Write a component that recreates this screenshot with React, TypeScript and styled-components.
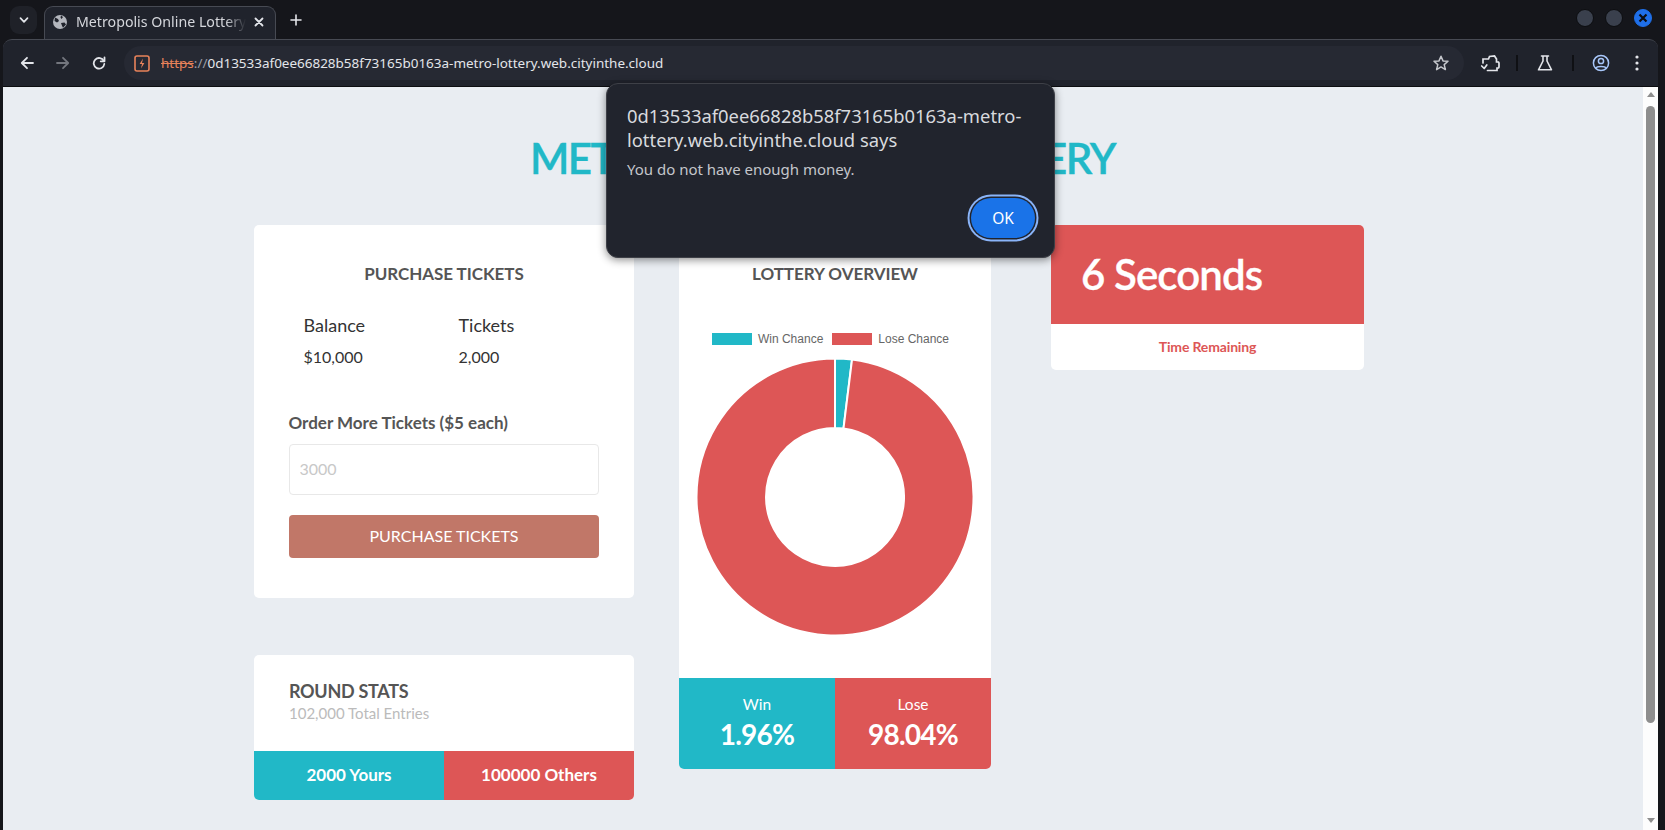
import React from "react";
import styled, { createGlobalStyle } from "styled-components";

const Global = createGlobalStyle`
  html, body { margin: 0; padding: 0; width: 1665px; height: 830px; overflow: hidden; background: #15161b; }
  * { box-sizing: border-box; }
`;

const TEAL = "#21b8c7";
const RED = "#dd5656";
const ORANGE = "#e8825a";
const CHROME = "'Noto Sans', sans-serif";
const LATO = "Lato, 'Liberation Sans', sans-serif";

const Window = styled.div`
  width: 1665px; height: 830px; position: relative; overflow: hidden;
  display: flex; flex-direction: column; background: #15161b; font-family: ${LATO};
`;
const TabStrip = styled.div`
  height: 39px; flex: none; display: flex; align-items: flex-end; padding-left: 10px; color: #e3e5ea;
  font-family: ${CHROME};
`;
const TabMenu = styled.div`
  width: 27px; height: 28px; margin-bottom: 5px; border-radius: 9px; background: #1f2128;
  display: flex; align-items: center; justify-content: center;
`;
const Tab = styled.div`
  width: 232px; height: 33px; margin-left: 7px; background: #20232c; border: 1px solid #474a53; border-bottom: 0;
  border-radius: 9px 9px 0 0; display: flex; align-items: center; padding: 0 9px 3px 7px; gap: 8px;
`;
const TabTitle = styled.span`
  flex: none; width: 170px; font-size: 14.2px; white-space: nowrap; overflow: hidden; color: #d5d7dc;
  -webkit-mask-image: linear-gradient(90deg, #000 88%, transparent 100%);
  mask-image: linear-gradient(90deg, #000 88%, transparent 100%);
`;
const NewTab = styled.div`
  width: 16px; height: 33px; margin: 0 0 3px 12px; display: flex; align-items: center; justify-content: center;
`;
const WindowControls = styled.div`
  margin-left: auto; margin-right: 13px; align-self: flex-start; margin-top: 9px; display: flex; gap: 11px;
`;
const Dot = styled.div<{ $active?: boolean }>`
  width: 18px; height: 18px; border-radius: 50%; background: ${p => (p.$active ? "#1f6fe8" : "#3a404d")};
  border: 1px solid ${p => (p.$active ? "#1f6fe8" : "#0c0d10")};
  display: flex; align-items: center; justify-content: center;
`;
const Toolbar = styled.div`
  height: 48px; flex: none; margin: 0 7px 0 3px; background: #20232c; border-top: 1px solid #474a53;
  border-radius: 9px 9px 0 0; display: flex; align-items: center; padding: 0 0 0 14px; border-bottom: 1px solid #0c0d10;
`;
const NavIcon = styled.div`
  width: 20px; height: 20px; display: flex; align-items: center; justify-content: center; flex: none;
`;
const NavGroup = styled.div`
  display: flex; gap: 16px; align-items: center;
`;
const UrlPill = styled.div`
  width: 1340px; height: 34px; margin-left: 15px; background: #262933; border-radius: 17px; flex: none;
  display: flex; align-items: center; padding: 0 14px 0 10px;
`;
const SiteIcon = styled.div`
  width: 16px; height: 17px; flex: none; margin-right: 11px; display: flex;
`;
const UrlText = styled.div`
  flex: 1; font-family: ${CHROME}; font-size: 13.47px; color: #e3e5ea; white-space: nowrap;
`;
const Scheme = styled.span`
  color: ${ORANGE}; text-decoration: line-through;
`;
const SchemeTail = styled.span`
  color: #9a9ca3;
`;
const ToolIcons = styled.div`
  display: flex; align-items: center; margin-left: 14px; width: 186px;
`;
const ToolSlot = styled.div<{ $w: number; $shift?: number }>`
  width: ${p => p.$w}px; padding-right: ${p => p.$shift ?? 0}px; display: flex; justify-content: center; flex: none;
`;
const Divider = styled.div`
  width: 2px; height: 16px; background: #0f1014; flex: none;
`;
const Viewport = styled.div`
  flex: 1; margin: 0 7px 0 3px; background: #e9edf2; display: flex; min-height: 0;
`;
const Page = styled.div`
  flex: 1; min-width: 0; overflow: hidden; padding: 46px 0 0 0;
`;
const Title = styled.h1`
  margin: 0 0 41px 0; padding-right: 1px; height: 51px; line-height: 51px; text-align: center; font-size: 42px;
  font-weight: 600; color: ${TEAL}; font-family: ${LATO}; letter-spacing: -1.45px; white-space: nowrap;
  -webkit-text-stroke: 0.4px ${TEAL};
`;
const Columns = styled.div`
  display: flex; align-items: flex-start; padding-left: 251px;
`;
const LeftCol = styled.div`
  width: 380px; display: flex; flex-direction: column; gap: 57px; flex: none;
`;
const Card = styled.div`
  background: #fff; border-radius: 5px; overflow: hidden;
`;
const PurchaseCard = styled(Card)`
  height: 373px; padding: 38px 35px 0 35px;
`;
const CardHeading = styled.h2`
  margin: 0; font-size: 17px; line-height: 21px; font-weight: 700; color: #555; text-align: center; letter-spacing: -0.05px;
`;
const Balances = styled.div`
  display: grid; grid-template-columns: 155px 1fr; padding: 29px 0 0 14.5px;
`;
const BalanceLabel = styled.div`
  font-size: 18px; line-height: 24px; color: #333;
`;
const BalanceValue = styled.div`
  font-size: 16px; line-height: 22px; color: #333; margin-top: 9px;
`;
const OrderLabel = styled.div`
  margin-top: 43px; margin-left: -0.5px; font-size: 17px; line-height: 24px; font-weight: 700; color: #555;
`;
const NumberInput = styled.input`
  display: block; width: 100%; height: 51px; margin-top: 9px; border: 1px solid #e8e8e8; border-radius: 4px;
  padding: 0 10px 2px 9.5px; font-family: ${LATO}; font-size: 16px; background: #fff;
  &::placeholder { color: #c8c8c8; opacity: 1; }
`;
const PurchaseButton = styled.button`
  display: block; width: 100%; height: 43px; margin-top: 20px; border: 0; border-radius: 4px; background: #c17768;
  padding: 0 0 2px; color: #fff; font-family: ${LATO}; font-size: 16px; font-weight: 400;
`;
const StatsCard = styled(Card)`
  height: 145px; display: flex; flex-direction: column;
`;
const StatsHead = styled.div`
  flex: 1; padding: 25px 35px 0;
`;
const StatsTitle = styled.div`
  font-size: 18px; line-height: 22px; font-weight: 700; color: #555; letter-spacing: -0.3px;
`;
const StatsSub = styled.div`
  font-size: 15px; line-height: 20px; color: #bbb; margin-top: 1px;
`;
const SplitRow = styled.div`
  display: flex; flex: none;
`;
const SplitCell = styled.div<{ $tone: "win" | "lose"; $h: number }>`
  flex: 1; height: ${p => p.$h}px; background: ${p => (p.$tone === "win" ? TEAL : RED)}; color: #fff;
  display: flex; flex-direction: column; align-items: center; justify-content: center; text-align: center;
`;
const StatsCellText = styled.span`
  font-size: 17px; font-weight: 700; margin-bottom: 2px;
`;
const MidCard = styled(Card)`
  width: 312px; height: 544px; margin-left: 45px; flex: none; display: flex; flex-direction: column;
`;
const MidHead = styled.div`
  padding-top: 38px;
`;
const Legend = styled.div`
  display: flex; align-items: center; justify-content: center; gap: 9px; margin: 48px 9px 0 0; height: 14px;
  font-family: 'Liberation Sans', sans-serif; font-size: 12px; color: #666;
`;
const LegendItem = styled.div`
  display: flex; align-items: center; gap: 6px;
`;
const LegendSwatch = styled.i<{ $c: string }>`
  display: block; width: 40px; height: 12px; background: ${p => p.$c};
`;
const ChartBox = styled.div`
  flex: 1; display: flex; justify-content: center; padding-top: 11px;
`;
const WinLabel = styled.div`
  font-size: 15.5px; line-height: 20px;
`;
const WinValue = styled.div`
  font-size: 28px; line-height: 34px; font-weight: 700; margin-top: 3px; letter-spacing: -0.8px;
`;
const WinStack = styled.div`
  margin-bottom: 3px;
`;
const TimeCard = styled(Card)`
  width: 313px; height: 145px; margin-left: 60px; flex: none; display: flex; flex-direction: column;
`;
const TimeHead = styled.div`
  height: 99px; background: ${RED}; color: #fff; font-size: 42px; font-weight: 600; padding: 0 0 2px 30px;
  display: flex; align-items: center; letter-spacing: -0.9px; -webkit-text-stroke: 0.3px #fff;
`;
const TimeFoot = styled.div`
  flex: 1; display: flex; align-items: center; justify-content: center; color: ${RED}; font-size: 14px; font-weight: 700;
  letter-spacing: -0.15px; padding-bottom: 2px;
`;
const ScrollTrack = styled.div`
  width: 15px; flex: none; background: #fdfdfd; display: flex; flex-direction: column; align-items: center; padding-top: 5px;
`;
const ArrowUp = styled.div`
  width: 0; height: 0; border: 4.5px solid transparent; border-top: 0; border-bottom: 5px solid #8e8e8e;
`;
const ArrowDown = styled.div`
  width: 0; height: 0; border: 4.5px solid transparent; border-bottom: 0; border-top: 5px solid #8e8e8e; margin-top: 95px;
`;
const ScrollThumb = styled.div`
  width: 9px; height: 617px; margin-top: 9px; border-radius: 5px; background: #8e8e8e;
`;
const Dialog = styled.div`
  position: absolute; left: 606px; top: 83px; width: 449px; height: 175px; background: #21242d; border: 1px solid #3e4047;
  border-radius: 12px; box-shadow: 0 2px 8px rgba(0,0,0,.45); padding: 20px 20px 0; font-family: ${CHROME}; color: #e3e5ea;
`;
const DialogTitle = styled.div`
  font-size: 18.4px; line-height: 23.5px; color: #d8dade; width: 400px;
`;
const DialogMsg = styled.div`
  font-size: 15px; line-height: 20px; color: #c4c6cb; margin-top: 8px;
`;
const OkButton = styled.button`
  position: absolute; right: 19px; bottom: 19px; width: 64px; height: 40px; border-radius: 20px; border: 0; background: #1a73e8;
  box-shadow: 0 0 0 1.5px #21242d, 0 0 0 3.5px #8ab4f8; color: #fff; font-family: ${CHROME}; font-size: 15.5px;
`;

const pt = (r: number, deg: number) => {
  const a = (deg - 90) * Math.PI / 180;
  return `${(140 + r * Math.cos(a)).toFixed(2)} ${(140 + r * Math.sin(a)).toFixed(2)}`;
};
const arc = (a: number, b: number) => {
  const large = b - a > 180 ? 1 : 0;
  return `M${pt(138.5, a)}A138.5 138.5 0 ${large} 1 ${pt(138.5, b)}L${pt(69, b)}A69 69 0 ${large} 0 ${pt(69, a)}Z`;
};

const Donut = () => (
  <svg width="280" height="280" viewBox="0 0 280 280">
    <path d={arc(0, 7.06)} fill={TEAL} stroke="#fff" strokeWidth="2" />
    <path d={arc(7.06, 360)} fill={RED} stroke="#fff" strokeWidth="2" />
  </svg>
);

export default function App() {
  const stroke = { fill: "none", stroke: "#e3e5ea", strokeWidth: 1.8, strokeLinecap: "round" as const, strokeLinejoin: "round" as const };
  return (
    <Window>
      <Global />
      <TabStrip>
        <TabMenu>
          <svg width="10" height="10" viewBox="0 0 10 10"><path d="M1.5 3.2 5 6.8 8.5 3.2" {...stroke} strokeWidth={1.7} /></svg>
        </TabMenu>
        <Tab>
          <svg width="16" height="16" viewBox="0 0 16 16">
            <circle cx="8" cy="8" r="7" fill="#b3b6bd" />
            <path d="M3 3.5 6 5 7 7 5 8.5 2.5 7ZM9 1.5 11 3 9.5 5 8.5 3.5ZM9 9l3.5-.5 1.5 2-3 3.3-1-2Z" fill="#20232c" />
          </svg>
          <TabTitle>Metropolis Online Lottery</TabTitle>
          <svg width="10" height="10" viewBox="0 0 10 10"><path d="M1.5 1.5 8.5 8.5M8.5 1.5 1.5 8.5" {...stroke} /></svg>
        </Tab>
        <NewTab>
          <svg width="12" height="12" viewBox="0 0 12 12"><path d="M6 1V11M1 6H11" {...stroke} strokeWidth={1.6} /></svg>
        </NewTab>
        <WindowControls>
          <Dot />
          <Dot />
          <Dot $active>
            <svg width="10" height="10" viewBox="0 0 10 10"><path d="M1.5 1.5 8.5 8.5M8.5 1.5 1.5 8.5" fill="none" stroke="#0c0d10" strokeWidth="2.2" /></svg>
          </Dot>
        </WindowControls>
      </TabStrip>
      <Toolbar>
        <NavGroup>
          <NavIcon>
            <svg width="14" height="14" viewBox="0 0 14 14"><path d="M13 7H2M7 1.8 1.8 7 7 12.2" {...stroke} /></svg>
          </NavIcon>
          <NavIcon>
            <svg width="14" height="14" viewBox="0 0 14 14"><path d="M1 7H12M7 1.8 12.2 7 7 12.2" {...stroke} stroke="#73767e" /></svg>
          </NavIcon>
          <NavIcon>
            <svg width="14" height="14" viewBox="0 0 14 14"><path d="M11.8 5A5.3 5.3 0 1 0 12.3 8" {...stroke} /><path d="M12.5 1.5V5.3H8.7" {...stroke} /></svg>
          </NavIcon>
        </NavGroup>
        <UrlPill>
          <SiteIcon>
            <svg width="16" height="17" viewBox="0 0 16 17">
              <rect x="1" y="1" width="14" height="15" rx="2" fill="none" stroke={ORANGE} strokeWidth="1.6" />
              <path d="M9 3.5 5.6 9H8l-1 4.5L10.4 8H8Z" fill={ORANGE} />
            </svg>
          </SiteIcon>
          <UrlText><Scheme>https</Scheme><SchemeTail>://</SchemeTail>0d13533af0ee66828b58f73165b0163a-metro-lottery.web.cityinthe.cloud</UrlText>
          <svg width="18" height="18" viewBox="0 0 18 18"><path d="M9 2.2 11 6.9 16 7.3 12.2 10.6 13.4 15.6 9 12.9 4.6 15.6 5.8 10.6 2 7.3 7 6.9Z" {...stroke} stroke="#c5c7cc" strokeWidth={1.5} /></svg>
        </UrlPill>
        <ToolIcons>
          <ToolSlot $w={38} $shift={14}>
            <svg width="20" height="20" viewBox="0 0 20 20">
              <path d="M3 10V6H8.5L9.5 3.5 14.5 3 16.5 6V9H18.5L19 10V14L18.5 15H17V17.5H7.5" {...stroke} strokeWidth={1.7} strokeLinejoin="miter" />
              <path d="M1.7 13 4.2 15.5 6.8 12" {...stroke} strokeWidth={1.7} />
            </svg>
          </ToolSlot>
          <Divider />
          <ToolSlot $w={54}>
            <svg width="16" height="16" viewBox="0 0 16 16"><path d="M4.5 1H11.5M6 1V6L1.5 14.8H14.5L10 6V1" {...stroke} strokeWidth={1.6} /></svg>
          </ToolSlot>
          <Divider />
          <ToolSlot $w={54}>
            <svg width="18" height="18" viewBox="0 0 18 18" fill="none" stroke="#a8c7fa" strokeWidth="1.5"><circle cx="9" cy="9" r="7.6" /><circle cx="9" cy="7" r="2.6" /><path d="M3.8 14.2C5 11.8 13 11.8 14.2 14.2" /></svg>
          </ToolSlot>
          <ToolSlot $w={18}>
            <svg width="4" height="16" viewBox="0 0 4 16"><circle cx="2" cy="2" r="1.6" fill="#e3e5ea" /><circle cx="2" cy="8" r="1.6" fill="#e3e5ea" /><circle cx="2" cy="14" r="1.6" fill="#e3e5ea" /></svg>
          </ToolSlot>
        </ToolIcons>
      </Toolbar>
      <Viewport>
        <Page>
          <Title>METROPOLIS ONLINE LOTTERY</Title>
          <Columns>
            <LeftCol>
              <PurchaseCard>
                <CardHeading>PURCHASE TICKETS</CardHeading>
                <Balances>
                  <BalanceLabel>Balance</BalanceLabel>
                  <BalanceLabel>Tickets</BalanceLabel>
                  <BalanceValue>$10,000</BalanceValue>
                  <BalanceValue>2,000</BalanceValue>
                </Balances>
                <OrderLabel>Order More Tickets ($5 each)</OrderLabel>
                <NumberInput placeholder="3000" />
                <PurchaseButton>PURCHASE TICKETS</PurchaseButton>
              </PurchaseCard>
              <StatsCard>
                <StatsHead>
                  <StatsTitle>ROUND STATS</StatsTitle>
                  <StatsSub>102,000 Total Entries</StatsSub>
                </StatsHead>
                <SplitRow>
                  <SplitCell $tone="win" $h={49}><StatsCellText>2000 Yours</StatsCellText></SplitCell>
                  <SplitCell $tone="lose" $h={49}><StatsCellText>100000 Others</StatsCellText></SplitCell>
                </SplitRow>
              </StatsCard>
            </LeftCol>
            <MidCard>
              <MidHead>
                <CardHeading>LOTTERY OVERVIEW</CardHeading>
                <Legend>
                  <LegendItem><LegendSwatch $c={TEAL} />Win Chance</LegendItem>
                  <LegendItem><LegendSwatch $c={RED} />Lose Chance</LegendItem>
                </Legend>
              </MidHead>
              <ChartBox><Donut /></ChartBox>
              <SplitRow>
                <SplitCell $tone="win" $h={91}><WinStack><WinLabel>Win</WinLabel><WinValue>1.96%</WinValue></WinStack></SplitCell>
                <SplitCell $tone="lose" $h={91}><WinStack><WinLabel>Lose</WinLabel><WinValue>98.04%</WinValue></WinStack></SplitCell>
              </SplitRow>
            </MidCard>
            <TimeCard>
              <TimeHead>6 Seconds</TimeHead>
              <TimeFoot>Time Remaining</TimeFoot>
            </TimeCard>
          </Columns>
        </Page>
        <ScrollTrack>
          <ArrowUp />
          <ScrollThumb />
          <ArrowDown />
        </ScrollTrack>
      </Viewport>
      <Dialog>
        <DialogTitle>0d13533af0ee66828b58f73165b0163a-metro-lottery.web.cityinthe.cloud says</DialogTitle>
        <DialogMsg>You do not have enough money.</DialogMsg>
        <OkButton>OK</OkButton>
      </Dialog>
    </Window>
  );
}
